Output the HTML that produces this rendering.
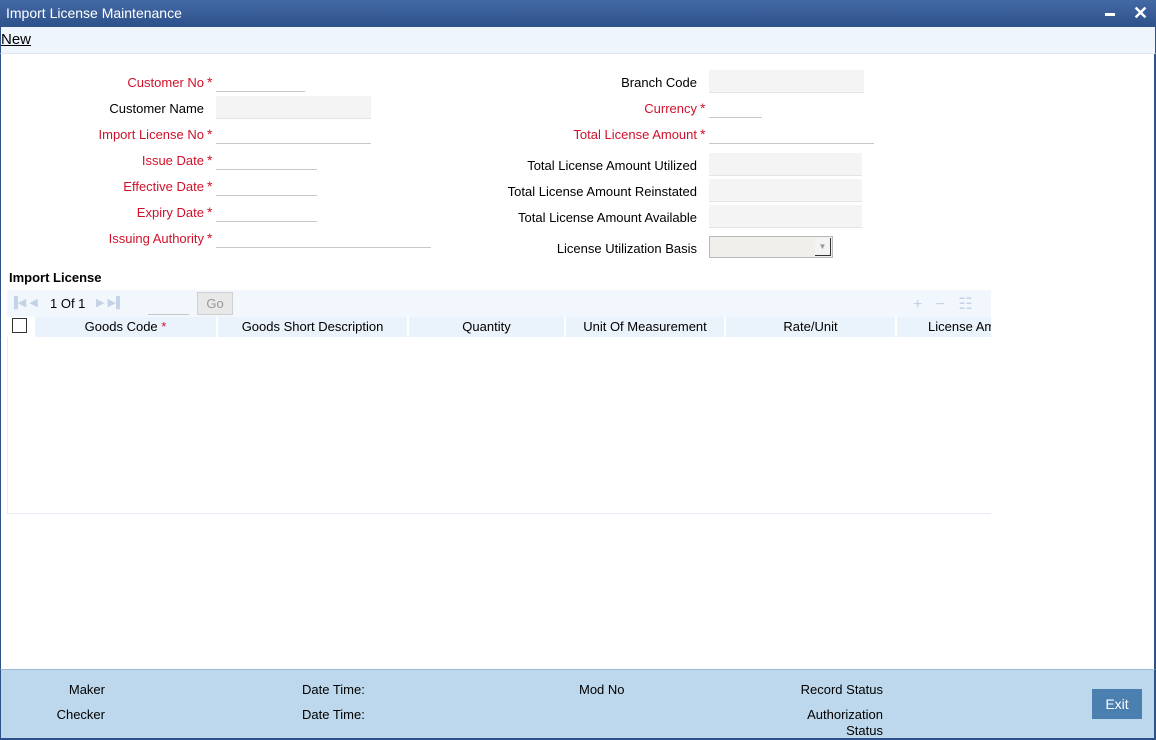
<!DOCTYPE html>
<html><head><style>
*{margin:0;padding:0;box-sizing:border-box}
body{width:1156px;height:740px;position:relative;overflow:hidden;background:#fff;font-family:"Liberation Sans",Arial,sans-serif;font-size:13px;color:#000}
.a{position:absolute}
.title{left:0;top:0;width:1156px;height:27px;background:linear-gradient(#4369a6,#2d5189);color:#fff;font-size:14px;padding:5px 0 0 6px}
.tb{left:0;top:27px;width:1156px;height:27px;background:#eef5fd;border-bottom:1px solid #dfe6ee;border-left:1px solid #2d5189;border-right:1px solid #2d5189}
.frame{left:0;top:54px;width:1156px;height:615px;border-left:1px solid #2d5189;border-right:2px solid #2d5189}
.l{text-align:right;white-space:nowrap}
.r{color:#d0112b}
.st{color:#d0112b;position:absolute;font-size:14px;margin-top:2px}
.u{border-bottom:1px solid #c8c8c8;height:22px}
.g{background:#f4f4f4;border-bottom:1px solid #e4e4e4;height:23px}
.hd{top:317px;height:20px;background:#eaf2fb;text-align:center;padding-top:2px;border-right:2px solid #fff}
.foot{left:0;top:669px;width:1156px;height:71px;background:#bdd8ec;border-top:1px solid #9dbcd8;border-left:1px solid #2d5189;border-right:2px solid #2d5189;border-bottom:2px solid #2d5189}
</style></head><body>
<div class="a title">Import License Maintenance</div>
<div class="a" style="left:1105px;top:13px;width:10px;height:3px;background:#fff"></div>
<div class="a" style="left:1133px;top:3px;color:#fff;font-size:18px;font-weight:bold">✕</div>
<div class="a tb"></div>
<div class="a" style="left:1px;top:31px;font-size:15px;text-decoration:underline">New</div>
<div class="a frame"></div>

<div class="a l r" style="right:952px;top:75px">Customer No</div><span class="st" style="left:207px;top:72px">*</span>
<div class="a u" style="left:216px;top:70px;width:89px"></div>
<div class="a l" style="right:952px;top:101px">Customer Name</div>
<div class="a g" style="left:216px;top:96px;width:155px"></div>
<div class="a l r" style="right:952px;top:127px">Import License No</div><span class="st" style="left:207px;top:124px">*</span>
<div class="a u" style="left:216px;top:122px;width:155px"></div>
<div class="a l r" style="right:952px;top:153px">Issue Date</div><span class="st" style="left:207px;top:150px">*</span>
<div class="a u" style="left:216px;top:148px;width:101px"></div>
<div class="a l r" style="right:952px;top:179px">Effective Date</div><span class="st" style="left:207px;top:176px">*</span>
<div class="a u" style="left:216px;top:174px;width:101px"></div>
<div class="a l r" style="right:952px;top:205px">Expiry Date</div><span class="st" style="left:207px;top:202px">*</span>
<div class="a u" style="left:216px;top:200px;width:101px"></div>
<div class="a l r" style="right:952px;top:231px">Issuing Authority</div><span class="st" style="left:207px;top:228px">*</span>
<div class="a u" style="left:216px;top:226px;width:215px"></div>

<div class="a l" style="right:459px;top:75px">Branch Code</div>
<div class="a g" style="left:709px;top:70px;width:155px"></div>
<div class="a l r" style="right:459px;top:101px">Currency</div><span class="st" style="left:700px;top:98px">*</span>
<div class="a u" style="left:709px;top:96px;width:53px"></div>
<div class="a l r" style="right:459px;top:127px">Total License Amount</div><span class="st" style="left:700px;top:124px">*</span>
<div class="a u" style="left:709px;top:122px;width:165px"></div>
<div class="a l" style="right:459px;top:158px">Total License Amount Utilized</div>
<div class="a g" style="left:709px;top:153px;width:153px"></div>
<div class="a l" style="right:459px;top:184px">Total License Amount Reinstated</div>
<div class="a g" style="left:709px;top:179px;width:153px"></div>
<div class="a l" style="right:459px;top:210px">Total License Amount Available</div>
<div class="a g" style="left:709px;top:205px;width:153px"></div>
<div class="a l" style="right:459px;top:241px">License Utilization Basis</div>
<div class="a" style="left:709px;top:236px;width:124px;height:22px;background:#f0efeb;border:1px solid #b8b8b8"></div>
<div class="a" style="left:815px;top:238px;width:16px;height:18px;background:#f3f3f3;border-right:1px solid #333;border-bottom:1px solid #333;color:#999;font-size:8px;text-align:center;padding-top:4px">▼</div>

<div class="a" style="left:9px;top:270px;font-weight:bold">Import License</div>
<div class="a" style="left:7px;top:290px;width:984px;height:27px;background:#f2f7fd"></div>
<div class="a" style="left:10px;top:296px;color:#c4d2e6;font-size:11px">▐◀ ◀</div>
<div class="a" style="left:50px;top:296px">1 Of 1</div>
<div class="a" style="left:96px;top:296px;color:#c4d2e6;font-size:11px">▶ ▶▌</div>
<div class="a" style="left:148px;top:293px;width:41px;height:22px;border-bottom:1px solid #c8c8c8"></div>
<div class="a" style="left:197px;top:292px;width:36px;height:23px;background:#e8e8e8;border:1px solid #d0d0d0;color:#999;text-align:center;padding-top:3px">Go</div>
<div class="a" style="left:913px;top:294px;color:#c4d2e6;font-size:16px">+&nbsp;&nbsp; −&nbsp;&nbsp; ☷</div>
<div class="a" style="left:7px;top:317px;width:28px;height:20px;background:#fff"></div>
<div class="a" style="left:12px;top:318px;width:15px;height:15px;border:1px solid #333;background:#fff"></div>
<div class="a hd" style="left:35px;width:183px">Goods Code <span class="r">*</span></div>
<div class="a hd" style="left:218px;width:191px">Goods Short Description</div>
<div class="a hd" style="left:409px;width:157px">Quantity</div>
<div class="a hd" style="left:566px;width:160px">Unit Of Measurement</div>
<div class="a hd" style="left:726px;width:171px">Rate/Unit</div>
<div class="a hd" style="left:897px;width:94px;text-align:left;padding-left:31px;overflow:hidden;white-space:nowrap;border-right:0">License Amount</div>
<div class="a" style="left:7px;top:337px;width:984px;height:177px;border-left:1px solid #e6edf5;border-bottom:1px solid #e6edf5"></div>

<div class="a foot"></div>
<div class="a l" style="right:1051px;top:682px">Maker</div>
<div class="a l" style="right:1051px;top:707px">Checker</div>
<div class="a" style="left:302px;top:682px">Date Time:</div>
<div class="a" style="left:302px;top:707px">Date Time:</div>
<div class="a" style="left:579px;top:682px">Mod No</div>
<div class="a l" style="right:273px;top:682px">Record Status</div>
<div class="a l" style="right:273px;top:707px;line-height:16px">Authorization<br>Status</div>
<div class="a" style="left:1092px;top:689px;width:50px;height:30px;background:#4a7fb0;color:#fff;font-size:14px;text-align:center;padding-top:7px">Exit</div>
</body></html>
